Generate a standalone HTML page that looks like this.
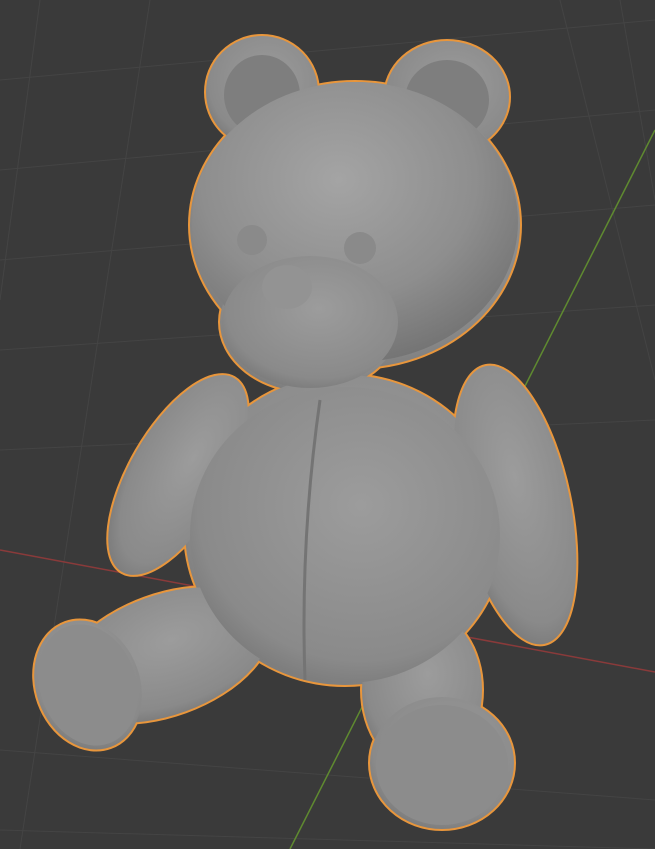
<!DOCTYPE html>
<html><head><meta charset="utf-8"><style>html,body{margin:0;padding:0;background:#3a3a3a;overflow:hidden}svg{display:block}</style></head>
<body>
<svg width="655" height="849" viewBox="0 0 655 849" xmlns="http://www.w3.org/2000/svg">
<defs>
<radialGradient id="g" cx="0.45" cy="0.35" r="0.7">
<stop offset="0" stop-color="#a4a4a4"/><stop offset="0.6" stop-color="#8e8e8e"/><stop offset="1" stop-color="#707070"/>
</radialGradient>
<radialGradient id="g2" cx="0.55" cy="0.4" r="0.7">
<stop offset="0" stop-color="#9c9c9c"/><stop offset="0.75" stop-color="#8a8a8a"/><stop offset="1" stop-color="#707070"/>
</radialGradient>
<g id="sil">
<ellipse cx="262" cy="92" rx="56" ry="56"/>
<ellipse cx="447" cy="97" rx="62" ry="56"/>
<ellipse cx="355" cy="225" rx="165" ry="143"/>
<ellipse cx="310" cy="322" rx="90" ry="70"/>
<ellipse cx="345" cy="530" rx="160" ry="155"/>
<ellipse cx="178" cy="475" rx="48" ry="112" transform="rotate(30 178 475)"/>
<ellipse cx="515" cy="505" rx="55" ry="142" transform="rotate(-12 515 505)"/>
<ellipse cx="165" cy="655" rx="110" ry="60" transform="rotate(-20 165 655)"/>
<ellipse cx="88" cy="685" rx="52" ry="66" transform="rotate(-20 88 685)"/>
<ellipse cx="422" cy="690" rx="60" ry="80"/>
<ellipse cx="442" cy="763" rx="72" ry="66"/>
</g>
</defs>
<rect width="655" height="849" fill="#3a3a3a"/>
<g stroke="#444" stroke-width="1">
<line x1="0" y1="80" x2="655" y2="20"/><line x1="0" y1="170" x2="655" y2="110"/>
<line x1="0" y1="260" x2="655" y2="205"/><line x1="0" y1="350" x2="655" y2="305"/>
<line x1="0" y1="450" x2="655" y2="420"/><line x1="0" y1="750" x2="655" y2="800"/>
<line x1="0" y1="830" x2="655" y2="849"/>
<line x1="40" y1="0" x2="0" y2="300"/><line x1="150" y1="0" x2="20" y2="849"/>
<line x1="560" y1="0" x2="655" y2="380"/><line x1="620" y1="0" x2="655" y2="200"/>
</g>
<line x1="0" y1="550" x2="655" y2="672" stroke="#8a3a3a" stroke-width="1.5"/>
<line x1="655" y1="130" x2="290" y2="849" stroke="#5f8a30" stroke-width="1.5"/>
<use href="#sil" fill="#e8963c" stroke="#e8963c" stroke-width="4"/>
<use href="#sil" fill="url(#g2)"/>
<ellipse cx="262" cy="95" rx="38" ry="40" fill="#7e7e7e"/>
<ellipse cx="447" cy="100" rx="42" ry="40" fill="#7e7e7e"/>
<ellipse cx="355" cy="222" rx="163" ry="140" fill="url(#g)"/>
<ellipse cx="310" cy="322" rx="88" ry="66" fill="url(#g2)"/>
<ellipse cx="345" cy="535" rx="155" ry="148" fill="url(#g2)"/>
<path d="M320 400 Q300 540 305 680" stroke="#747474" stroke-width="3" fill="none"/>
<ellipse cx="88" cy="685" rx="48" ry="62" transform="rotate(-20 88 685)" fill="#8c8c8c"/>
<ellipse cx="442" cy="765" rx="66" ry="60" fill="#8c8c8c"/>
<circle cx="252" cy="240" r="15" fill="#8a8a8a"/>
<circle cx="360" cy="248" r="16" fill="#8a8a8a"/>
<ellipse cx="287" cy="287" rx="25" ry="22" fill="#939393"/>
</svg>
</body></html>
